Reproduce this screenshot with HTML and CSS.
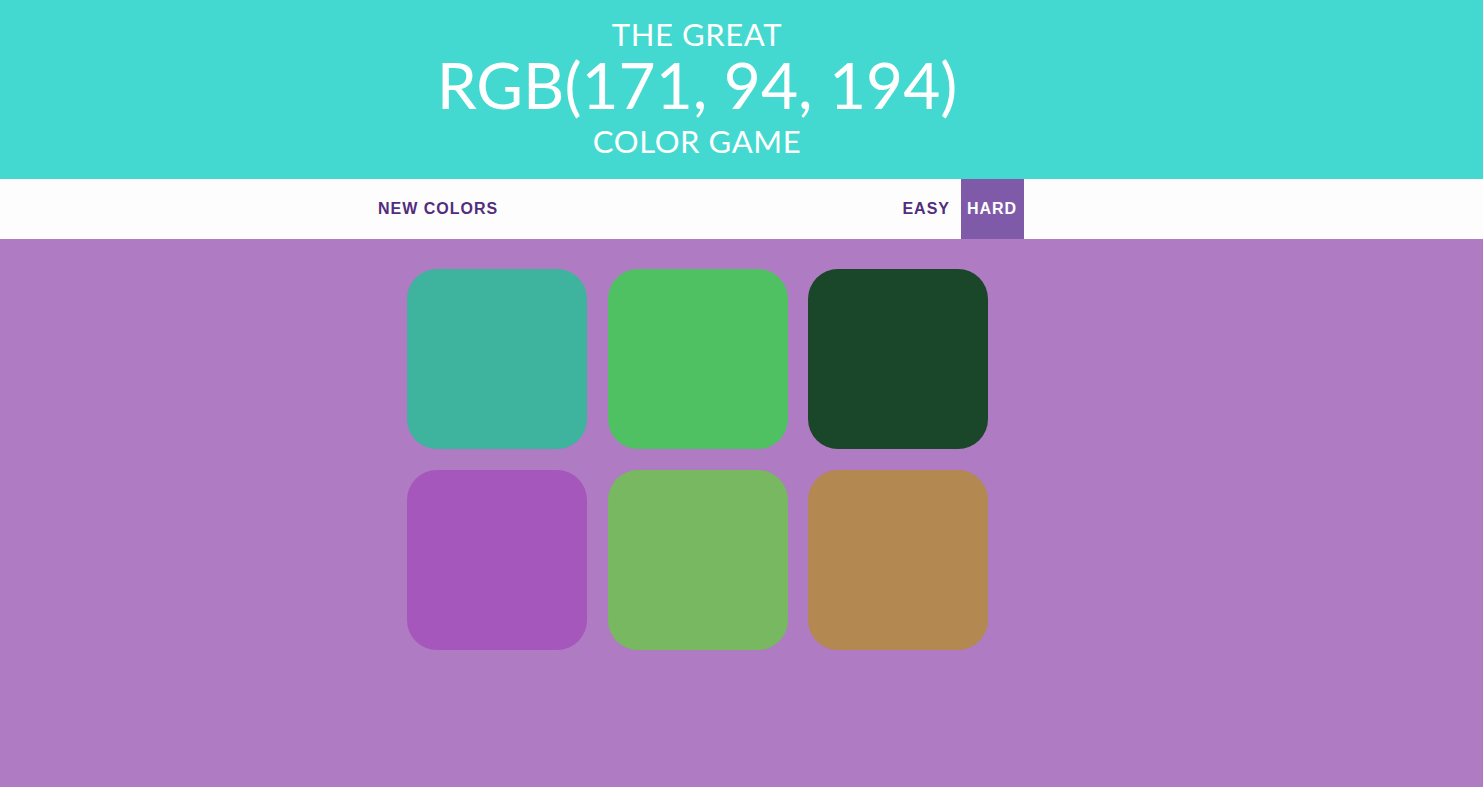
FILE: index.html
```html
<!DOCTYPE html>
<html>
<head>
<meta charset="utf-8">
<link rel="stylesheet" href="styles.css">
</head>
<body>
<header class="header">
  <h1 class="title">
    <span class="title-small">THE GREAT</span>
    <span class="title-big">RGB(171, 94, 194)</span>
    <span class="title-small title-last">COLOR GAME</span>
  </h1>
</header>
<nav class="stripe">
  <div class="stripe-inner">
    <button class="btn btn-new">NEW COLORS</button>
    <span class="message"></span>
    <div class="modes">
      <button class="btn">EASY</button>
      <button class="btn selected">HARD</button>
    </div>
  </div>
</nav>
<main class="container">
  <div class="square" style="background:#3eb39e"></div>
  <div class="square" style="background:#4fc162"></div>
  <div class="square" style="background:#1a4629"></div>
  <div class="square" style="background:#a557bc"></div>
  <div class="square" style="background:#77b860"></div>
  <div class="square" style="background:#b38851"></div>
</main>
</body>
</html>
```

FILE: styles.css
```css
html, body {
  margin: 0;
  padding: 0;
}
body {
  background: #af7bc2;
  font-family: "Lato", "Liberation Sans", sans-serif;
  min-height: 787px;
}
.header {
  background: #43d9d0;
  height: 179px;
  overflow: hidden;
}
.title {
  margin: 0 0 0 397px;
  width: 600px;
  text-align: center;
  color: #fff;
  font-weight: 400;
  padding-top: 15px;
}
.title-small {
  display: block;
  font-size: 31px;
  letter-spacing: 0.6px;
  line-height: 38px;
}
.title-big {
  display: block;
  font-size: 64px;
  line-height: 64px;
}
.title-last {
  line-height: 48px;
}
.stripe {
  background: #fdfdfe;
  height: 60px;
}
.stripe-inner {
  margin-left: 372px;
  width: 652px;
  height: 60px;
  display: flex;
  align-items: stretch;
  justify-content: space-between;
}
.modes {
  display: flex;
  gap: 5px;
}
.btn {
  border: none;
  background: none;
  font-family: "Liberation Sans", Arial, sans-serif;
  font-weight: 700;
  font-size: 16px;
  letter-spacing: 1px;
  color: #512d7c;
  padding: 0 6px;
  height: 60px;
  margin: 0;
}
.btn.selected {
  background: #7f5aa9;
  color: #fff;
  padding: 0 6px 0 5px;
  width: 63px;
}
.container {
  padding: 30px 0 0 407px;
  display: grid;
  grid-template-columns: repeat(3, 180px);
  column-gap: 20.5px;
  row-gap: 21px;
}
.square {
  width: 180px;
  height: 180px;
  border-radius: 30px;
}
```
